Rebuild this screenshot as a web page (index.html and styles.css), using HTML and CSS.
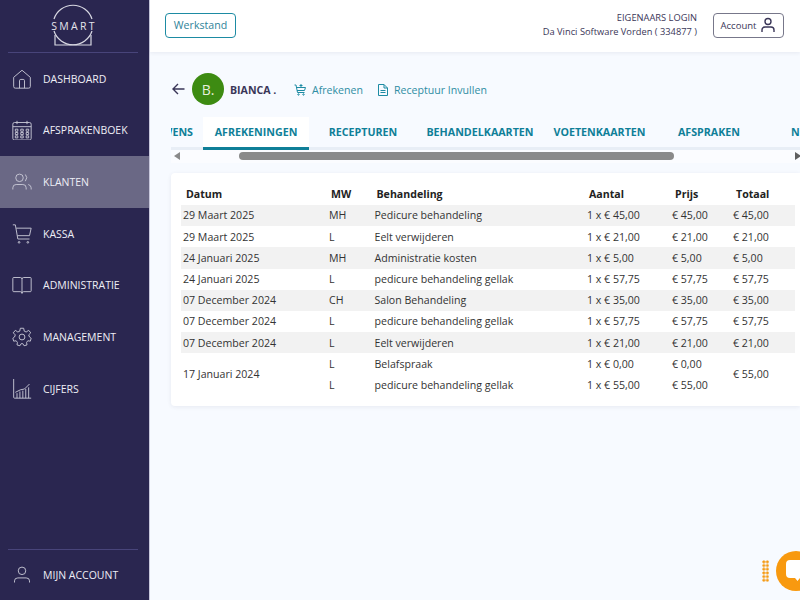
FILE: index.html
```html
<!DOCTYPE html>
<html lang="en">
<head>
    <meta charset="UTF-8">
    <title>Smart - Klanten</title>
    <link rel="stylesheet" href="styles.css">
</head>
<body>
    <div class="sidebar">
        <div class="logo">
            <svg width="60" height="46" viewBox="0 0 60 46" fill="none" stroke="#d8d8e2" stroke-width="1.2">
                <path d="M11 15 A20 20 0 0 1 49 15"/>
                <path d="M11 27 A20 20 0 0 0 49 27"/>
                <path d="M12 31 V41 H48 V31"/>
                <text class="logo-text" x="31" y="26" text-anchor="middle">SMART</text>
            </svg>
        </div>
        <nav class="nav">
            <a class="nav-item">
                <svg class="nav-icon" viewBox="0 0 24 24"><path d="M2 10 L12 1.5 L22 10 V21 Q22 23 20 23 H4 Q2 23 2 21 Z M9 23 V14 Q9 12.5 10.5 12.5 H13.500 Q15 12.5 15 14 V23"/></svg>
                <span>DASHBOARD</span>
            </a>
            <a class="nav-item">
                <svg class="nav-icon" viewBox="0 0 24 24"><path d="M3 3 H21 Q23 3 23 5 V22 Q23 24 21 24 H3 Q1 24 1 22 V5 Q1 3 3 3 Z M1 8 H23 M6 1 V5 M18 1 V5"/><path d="M4 11 h3 v2.500 h-3 z M4 15 h3 v2.500 h-3 z M4 19 h3 v2.500 h-3 z M10.500 11 h3 v2.500 h-3 z M10.500 15 h3 v2.500 h-3 z M10.500 19 h3 v2.500 h-3 z M17 11 h3 v2.500 h-3 z M17 15 h3 v2.500 h-3 z M17 19 h3 v2.500 h-3 z"/></svg>
                <span>AFSPRAKENBOEK</span>
            </a>
            <a class="nav-item active">
                <svg class="nav-icon" viewBox="0 0 24 24"><circle cx="9" cy="7" r="4.500"/><path d="M1 21 V19 Q1 15 5 15 H13 Q17 15 17 19 V21 M16 3 Q19.500 6.500 16 11 M19.500 15 Q23 16 23 19 V21"/></svg>
                <span>KLANTEN</span>
            </a>
            <a class="nav-item">
                <svg class="nav-icon" viewBox="0 0 24 24"><path d="M1 1 H4 L7 18 H21 M5 5 H23 L21 14 H6.500"/><circle cx="8.500" cy="22" r="1"/><circle cx="19" cy="22" r="1"/></svg>
                <span>KASSA</span>
            </a>
            <a class="nav-item">
                <svg class="nav-icon" viewBox="0 0 24 24"><path d="M12 5 Q12 3 10 3 H2 Q1 3 1 4 V19 Q1 20 2 20 H10 Q12 20 12 22 Q12 20 14 20 H22 Q23 20 23 19 V4 Q23 3 22 3 H14 Q12 3 12 5 Z M12 5 V22"/></svg>
                <span>ADMINISTRATIE</span>
            </a>
            <a class="nav-item">
                <svg class="nav-icon" viewBox="0 0 24 24"><circle cx="12" cy="12" r="3.500"/><path d="M10 1.500 H14 L14.700 5 L17 6 L20 4 L22.500 7 L20 9.500 L21 12 L23 13.500 L22 17 L19 16.500 L17.500 18.500 L18 21.500 L14.500 22.500 L13 20 H11 L9.500 22.500 L6 21.500 L6.500 18.500 L5 16.500 L2 17 L1 13.500 L3 12 L4 9.500 L1.500 7 L4 4 L7 6 L9.300 5 Z"/></svg>
                <span>MANAGEMENT</span>
            </a>
            <a class="nav-item">
                <svg class="nav-icon" viewBox="0 0 24 24"><path d="M2 0 V22 Q2 23 3 23 H23"/><path d="M6 23 V17 M9.500 23 V15 M13 23 V14 M16.500 23 V12 M20 23 V10 M4 16 L10 13 L15 12 L21 6"/></svg>
                <span>CIJFERS</span>
            </a>
        </nav>
        <div class="nav-bottom">
            <a class="nav-item">
                <svg class="nav-icon" viewBox="0 0 24 24"><circle cx="12" cy="7" r="4.500"/><path d="M3 21 V19 Q3 15.500 7 15.500 H17 Q21 15.500 21 19 V21"/></svg>
                <span>MIJN ACCOUNT</span>
            </a>
        </div>
    </div>

    <div class="main">
        <div class="topbar">
            <button class="werkstand">Werkstand</button>
            <div class="login-info">
                <div>EIGENAARS LOGIN</div>
                <div>Da Vinci Software Vorden ( 334877 )</div>
            </div>
            <button class="account">
                Account
                <svg width="16" height="16" viewBox="0 0 16 16" fill="none" stroke="#3a3658" stroke-width="1.4"><circle cx="8" cy="4.500" r="3"/><path d="M2 15 V13 Q2 10 5 10 H11 Q14 10 14 13 V15"/></svg>
            </button>
        </div>

        <div class="content">
            <div class="client-row">
                <svg class="back" width="13" height="12" viewBox="0 0 13 12" fill="none" stroke="#3a3658" stroke-width="1.4"><path d="M12.500 6 H1 M6 1 L1 6 L6 11"/></svg>
                <div class="avatar">B.</div>
                <span class="client-name">BIANCA .</span>
                <a class="client-link">
                    <svg width="12" height="12" viewBox="0 0 12 12" fill="none" stroke="#1d8ba3"><path d="M0.500 1 H2 L3.500 8.500 H10.500 M2.500 3.500 H11.500 L10.500 6.500 H3 M7 0 V3 M5.500 1.500 H8.500"/><circle cx="4.500" cy="10.500" r="0.700"/><circle cx="9.500" cy="10.500" r="0.700"/></svg>
                    Afrekenen
                </a>
                <a class="client-link">
                    <svg width="10" height="12" viewBox="0 0 10 12" fill="none" stroke="#1d8ba3"><path d="M1 0.500 H6 L9.500 4 V11.500 H0.500 V0.500 Z M6 0.500 V4 H9.500 M2.500 6.500 H7.500 M2.500 8.500 H7.500"/></svg>
                    Receptuur Invullen
                </a>
            </div>

            <div class="tabs">
                <div class="tab tab-first">WENS</div>
                <div class="tab active">AFREKENINGEN</div>
                <div class="tab tab-recepturen">RECEPTUREN</div>
                <div class="tab tab-kaarten">BEHANDELKAARTEN</div>
                <div class="tab tab-voet">VOETENKAARTEN</div>
                <div class="tab">AFSPRAKEN</div>
                <div class="tab tab-last">NOTITIES</div>
            </div>
            <div class="scrollbar">
                <span class="arrow-left"></span>
                <span class="thumb"></span>
                <span class="arrow-right"></span>
            </div>

            <div class="card">
                <table class="bills">
                    <colgroup>
                        <col class="col-datum"><col class="col-mw"><col class="col-beh"><col class="col-aantal"><col class="col-prijs"><col class="col-totaal">
                    </colgroup>
                    <thead>
                        <tr><th>Datum</th><th>MW</th><th>Behandeling</th><th>Aantal</th><th>Prijs</th><th>Totaal</th></tr>
                    </thead>
                    <tbody>
                        <tr class="odd"><td>29 Maart 2025</td><td>MH</td><td>Pedicure behandeling</td><td>1 x € 45,00</td><td>€ 45,00</td><td>€ 45,00</td></tr>
                        <tr><td>29 Maart 2025</td><td>L</td><td>Eelt verwijderen</td><td>1 x € 21,00</td><td>€ 21,00</td><td>€ 21,00</td></tr>
                        <tr class="odd"><td>24 Januari 2025</td><td>MH</td><td>Administratie kosten</td><td>1 x € 5,00</td><td>€ 5,00</td><td>€ 5,00</td></tr>
                        <tr><td>24 Januari 2025</td><td>L</td><td>pedicure behandeling gellak</td><td>1 x € 57,75</td><td>€ 57,75</td><td>€ 57,75</td></tr>
                        <tr class="odd"><td>07 December 2024</td><td>CH</td><td>Salon Behandeling</td><td>1 x € 35,00</td><td>€ 35,00</td><td>€ 35,00</td></tr>
                        <tr><td>07 December 2024</td><td>L</td><td>pedicure behandeling gellak</td><td>1 x € 57,75</td><td>€ 57,75</td><td>€ 57,75</td></tr>
                        <tr class="odd"><td>07 December 2024</td><td>L</td><td>Eelt verwijderen</td><td>1 x € 21,00</td><td>€ 21,00</td><td>€ 21,00</td></tr>
                        <tr><td rowspan="2">17 Januari 2024</td><td>L</td><td>Belafspraak</td><td>1 x € 0,00</td><td>€ 0,00</td><td rowspan="2">€ 55,00</td></tr>
                        <tr><td>L</td><td>pedicure behandeling gellak</td><td>1 x € 55,00</td><td>€ 55,00</td></tr>
                    </tbody>
                </table>
            </div>
        </div>
    </div>

    <div class="chat-dots"></div>
    <div class="chat-button">
        <svg width="26" height="26" viewBox="0 0 26 26" fill="#fff"><path d="M5 2 H26 V20 H15 L12.500 23 L10 20 H5 Q1 20 1 16 V6 Q1 2 5 2 Z"/></svg>
    </div>
</body>
</html>
```

FILE: styles.css
```css
:root {
    --sidebar-bg: #2a2650;
    --sidebar-line: #48447a;
    --sidebar-active: #6a6885;
    --page-bg: #f7faff;
    --teal: #0f7f98;
    --teal-light: #1d8ba3;
    --text-dark: #3a3658;
    --row-bg: #f2f2f2;
}

* {
    box-sizing: border-box;
}

html, body {
    height: 100%;
}

body {
    margin: 0;
    display: flex;
    overflow: hidden;
    font-family: "Open Sans", "Liberation Sans", sans-serif;
    font-size: 10.6px;
    background-color: var(--page-bg);
    color: #333;
}

.sidebar {
    width: 149px;
    flex-shrink: 0;
    display: flex;
    flex-direction: column;
    background-color: var(--sidebar-bg);
}

.logo {
    height: 53px;
    margin: 0 11px 0 8px;
    padding-top: 4px;
    display: flex;
    justify-content: center;
    border-bottom: 1px solid var(--sidebar-line);
}

.logo-text {
    font-family: "Open Sans", sans-serif;
    font-size: 10.5px;
    letter-spacing: 2.3px;
    fill: #e4e4ec;
    stroke: none;
}

.nav {
    flex: 1;
    display: flex;
    flex-direction: column;
}

.nav-item {
    height: 51.67px;
    display: flex;
    align-items: center;
    gap: 11px;
    padding: 0 0 0.4px 12px;
    font-size: 10.5px;
    font-weight: 500;
    color: #eeeef6;
}

.nav-item.active {
    background-color: var(--sidebar-active);
}

.nav-icon {
    width: 20px;
    height: 20px;
    flex-shrink: 0;
    fill: none;
    stroke: #c9c9d6;
    stroke-width: 1.1;
}

.nav-bottom {
    margin: 0 11px 0 8px;
    height: 51px;
    border-top: 1px solid var(--sidebar-line);
}

.nav-bottom .nav-item {
    margin-left: -8px;
    height: 50px;
}

.main {
    flex: 1;
    min-width: 0;
    display: flex;
    flex-direction: column;
    border-left: 1px solid #c8c8dc;
}

.topbar {
    height: 52px;
    flex-shrink: 0;
    display: flex;
    align-items: center;
    padding: 0 16px 2px 15px;
    background-color: #fff;
    box-shadow: 0 1px 4px rgba(40, 40, 80, 0.08);
}

.werkstand {
    width: 71px;
    height: 25px;
    padding: 0;
    border: 1px solid var(--teal-light);
    border-radius: 4px;
    background: #fff;
    color: #2f8399;
    font-family: inherit;
    font-size: 10.6px;
}

.login-info {
    margin-left: auto;
    text-align: right;
    font-size: 9.3px;
    line-height: 14px;
    color: var(--text-dark);
}

.account {
    width: 71px;
    height: 25px;
    margin-left: 16px;
    padding: 0;
    display: flex;
    align-items: center;
    justify-content: center;
    gap: 4px;
    border: 1px solid #77778a;
    border-radius: 4px;
    background: #fff;
    color: var(--text-dark);
    font-family: inherit;
    font-size: 9.5px;
}

.content {
    flex: 1;
    padding: 21px 0 0 21px;
    min-width: 0;
}

.client-row {
    height: 32px;
    display: flex;
    align-items: center;
}

.back {
    margin-left: 1px;
    margin-right: 7px;
}

.avatar {
    width: 32px;
    height: 32px;
    border-radius: 50%;
    display: flex;
    align-items: center;
    justify-content: center;
    background-color: #3d8b12;
    color: #e8f0dc;
    font-size: 14px;
}

.client-name {
    margin-left: 6px;
    margin-right: 18px;
    padding-top: 1px;
    width: 46px;
    white-space: nowrap;
    font-weight: 700;
    color: var(--text-dark);
}

.client-link {
    display: flex;
    align-items: center;
    gap: 6px;
    margin-right: 15px;
    padding-top: 1px;
    color: #2f8da3;
}

.tabs {
    height: 33px;
    margin-top: 12px;
    display: flex;
    overflow: hidden;
    box-shadow: inset 0 -3px 0 #e8eef6;
}

.tab {
    width: 106px;
    flex-shrink: 0;
    display: flex;
    align-items: center;
    justify-content: center;
    padding-bottom: 3px;
    font-size: 10.7px;
    font-weight: 700;
    color: var(--teal);
    white-space: nowrap;
    overflow: hidden;
}

.tab.active {
    padding-bottom: 0;
    background-color: #fff;
    border-bottom: 3px solid var(--teal);
}

.tab-first {
    width: 32px;
    justify-content: flex-end;
    padding-right: 10px;
}

.tab-recepturen {
    width: 108px;
}

.tab-kaarten {
    width: 126px;
}

.tab-voet {
    width: 113px;
}

.tab-last {
    width: 60px;
    justify-content: flex-start;
    padding-left: 29px;
}

.scrollbar {
    height: 13px;
    position: relative;
    background-color: #fbfcff;
}

.thumb {
    position: absolute;
    left: 68px;
    top: 2px;
    width: 435px;
    height: 8px;
    border-radius: 4px;
    background-color: #8a8a8a;
}

.arrow-left,
.arrow-right {
    position: absolute;
    top: 2px;
    width: 0;
    height: 0;
    border-top: 4px solid transparent;
    border-bottom: 4px solid transparent;
}

.arrow-left {
    left: 3px;
    border-right: 6px solid #8a8a8a;
}

.arrow-right {
    left: 624px;
    border-left: 6px solid #606060;
}

.card {
    margin-top: 10px;
    height: 233px;
    padding: 10px 5px 0 10px;
    background-color: #fff;
    border-radius: 4px 0 0 4px;
    box-shadow: 0 1px 4px rgba(40, 40, 80, 0.08);
}

.bills {
    width: 614px;
    table-layout: fixed;
    border-collapse: collapse;
}

.col-datum { width: 146px; }
.col-mw { width: 45.5px; }
.col-beh { width: 212.5px; }
.col-aantal { width: 85px; }
.col-prijs { width: 61px; }
.col-totaal { width: 64px; }

.bills th {
    height: 22px;
    padding: 0 0 1px 5px;
    text-align: left;
    font-weight: 700;
    color: #222;
}

.bills th:nth-child(2),
.bills th:nth-child(3),
.bills th:nth-child(4) {
    padding-left: 4px;
}

.bills td {
    height: 21.2px;
    padding: 0 0 0.4px 2px;
    color: #333;
    white-space: nowrap;
}

.bills .odd td {
    background-color: var(--row-bg);
}

.chat-dots {
    position: absolute;
    left: 762px;
    top: 560px;
    width: 7px;
    height: 22px;
    background-image: radial-gradient(circle, #f59a14 1.3px, transparent 1.6px);
    background-size: 3.6px 3.7px;
}

.chat-button {
    position: absolute;
    left: 776px;
    top: 551px;
    width: 40px;
    height: 40px;
    border-radius: 50%;
    background-color: #f8990f;
    display: flex;
    align-items: center;
    padding-left: 9px;
}
```
